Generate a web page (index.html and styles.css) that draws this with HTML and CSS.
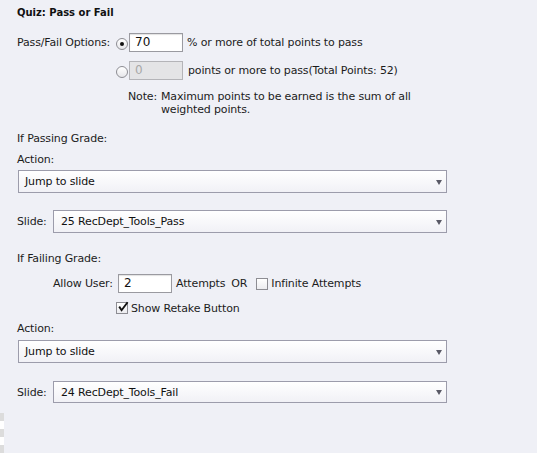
FILE: index.html
```html
<!DOCTYPE html>
<html>
<head>
<meta charset="utf-8">
<link rel="stylesheet" href="styles.css">
</head>
<body>
<div class="panel">
  <div class="title">Quiz: Pass or Fail</div>

  <div class="row opt1">
    <span class="lbl-opts">Pass/Fail Options:</span>
    <span class="radio on"></span>
    <span class="field">70</span>
    <span class="after">% or more of total points to pass</span>
  </div>

  <div class="row opt2">
    <span class="radio"></span>
    <span class="field disabled">0</span>
    <span class="after">points or more to pass(Total Points: 52)</span>
  </div>

  <div class="note">
    <span class="note-lbl">Note:</span>
    <span class="note-txt">Maximum points to be earned is the sum of all<br>weighted points.</span>
  </div>

  <div class="heading pass-head">If Passing Grade:</div>
  <div class="heading action">Action:</div>
  <div class="select wide"><span>Jump to slide</span><span class="arrow"></span></div>

  <div class="row slide-row">
    <span class="slide-lbl">Slide:</span>
    <div class="select slide"><span>25 RecDept_Tools_Pass</span><span class="arrow"></span></div>
  </div>

  <div class="heading fail-head">If Failing Grade:</div>

  <div class="row allow">
    <span class="allow-lbl">Allow User:</span>
    <span class="field">2</span>
    <span class="attempts">Attempts</span>
    <span class="or">OR</span>
    <span class="check"></span>
    <span class="check-txt">Infinite Attempts</span>
  </div>

  <div class="row retake">
    <span class="check"><svg width="12" height="12" viewBox="0 0 12 12"><path d="M2.2 5.6 L4.6 9.2 L10.6 1.2" fill="none" stroke="#111" stroke-width="1.9" stroke-linejoin="miter"/></svg></span>
    <span class="check-txt">Show Retake Button</span>
  </div>

  <div class="heading action2">Action:</div>
  <div class="select wide action2-select"><span>Jump to slide</span><span class="arrow"></span></div>

  <div class="row slide-row2">
    <span class="slide-lbl">Slide:</span>
    <div class="select slide"><span>24 RecDept_Tools_Fail</span><span class="arrow"></span></div>
  </div>
</div>
<div class="strip"></div>
</body>
</html>
```

FILE: styles.css
```css
html, body {
  margin: 0;
  padding: 0;
  background: #eff0f6;
}
body {
  width: 537px;
  height: 453px;
  overflow: hidden;
  font-family: "DejaVu Sans", "Liberation Sans", sans-serif;
  font-size: 11px;
  letter-spacing: -0.15px;
  color: #1c1c1c;
}
.panel {
  padding: 6px 0 0 17px;
}
.title {
  font-weight: bold;
  font-size: 10px;
  line-height: 14px;
  letter-spacing: 0;
  color: #111;
}
.row {
  display: flex;
  align-items: center;
  height: 19px;
}
.opt1 { margin-top: 13px; }
.opt2 { margin-top: 9px; padding-left: 99px; }
.lbl-opts { width: 99px; }
.radio {
  box-sizing: border-box;
  width: 12px;
  height: 12px;
  border-radius: 50%;
  border: 1px solid #8d8d93;
  background: linear-gradient(#ffffff, #e6e6ea);
  display: flex;
  align-items: center;
  justify-content: center;
  margin-top: 3px;
}
.radio.on::after {
  content: "";
  width: 4px;
  height: 4px;
  border-radius: 50%;
  background: #111;
}
.field {
  box-sizing: border-box;
  width: 54px;
  height: 19px;
  border: 1px solid #9a9aa0;
  background: #fff;
  padding: 0 0 0 5px;
  margin-left: 1px;
  line-height: 17px;
  font-size: 12px;
  letter-spacing: 0;
  color: #111;
  box-shadow: inset 0 1px 1px rgba(0,0,0,0.12);
}
.field.disabled {
  background: #e4e4e6;
  border-color: #b4b4b8;
  color: #a8a8a8;
  box-shadow: none;
}
.after { margin-left: 4px; }
.opt2 .after { margin-left: 5px; }
.note {
  display: flex;
  margin: 10px 0 0 111px;
  line-height: 13px;
}
.note-txt { margin-left: 4px; }
.heading { line-height: 14px; }
.pass-head { margin-top: 16px; }
.action { margin-top: 7px; }
.select {
  box-sizing: border-box;
  height: 23px;
  border: 1px solid #9c9cab;
  background: linear-gradient(#ffffff, #f1f1f6);
  display: flex;
  align-items: center;
  justify-content: space-between;
  padding: 0 4px 0 6px;
  font-size: 11px;
  color: #111;
}
.select.wide {
  width: 429px;
  margin: 3px 0 0 1px;
}
.select.action2-select { margin-top: 4px; }
.select.slide {
  width: 394px;
  padding-left: 7px;
}
.arrow {
  width: 0;
  height: 0;
  border-left: 3.5px solid transparent;
  border-right: 3.5px solid transparent;
  border-top: 5px solid #5a5a66;
  margin-top: 1px;
}
.slide-row { margin-top: 17px; height: 23px; }
.slide-row2 { margin-top: 18px; height: 22px; }
.slide-row2 .select { height: 22px; }
.slide-lbl { width: 36px; }
.fail-head { margin-top: 19px; }
.allow { margin-top: 8px; padding-left: 36px; }
.allow-lbl { width: 65px; }
.allow .field { margin-left: 0; }
.attempts { margin-left: 4px; }
.or { margin-left: 6px; }
.check {
  box-sizing: border-box;
  width: 12px;
  height: 12px;
  border: 1px solid #8d8d93;
  background: linear-gradient(#ffffff, #ececf0);
  display: flex;
  align-items: center;
  justify-content: center;
  position: relative;
}
.check svg {
  position: absolute;
  left: 0;
  top: -2px;
}
.allow .check { margin-left: 9px; }
.check-txt { margin-left: 3px; }
.retake { margin-top: 8px; padding-left: 99px; height: 14px; }
.action2 { margin-top: 7px; }
.strip {
  position: absolute;
  left: 0;
  top: 413px;
  width: 4px;
  height: 40px;
  background: repeating-linear-gradient(#dcdcdc 0 8px, #ffffff 8px 16px);
}
```
